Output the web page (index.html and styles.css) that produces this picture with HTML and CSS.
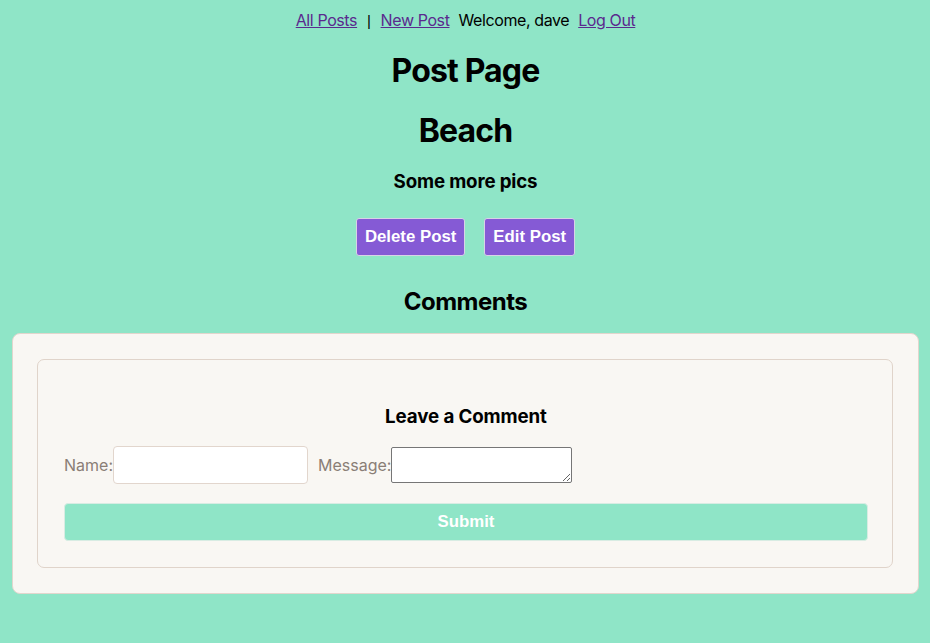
FILE: index.html
```html
<!DOCTYPE html>
<html lang="en">
<head>
<meta charset="utf-8">
<title>Post Page</title>
<link rel="stylesheet" href="styles.css">
</head>
<body>
<nav class="nav">
  <a href="#">All Posts</a>
  <span class="sep">|</span>
  <a href="#">New Post</a>
  <span class="welcome">Welcome, dave</span>
  <a href="#">Log Out</a>
</nav>
<h1 class="title">Post Page</h1>
<h1 class="title">Beach</h1>
<h3 class="subtitle">Some more pics</h3>
<div class="actions">
  <button class="btn">Delete Post</button>
  <button class="btn">Edit Post</button>
</div>
<h2 class="section">Comments</h2>
<div class="card">
  <div class="inner">
    <h3 class="form-title">Leave a Comment</h3>
    <div class="row">
      <label class="lbl">Name:<input class="name-input" type="text"></label>
      <label class="lbl">Message:<textarea class="msg"></textarea></label>
    </div>
    <button class="submit">Submit</button>
  </div>
</div>
</body>
</html>
```
FILE: styles.css
```css
html, body {
  margin: 0;
  background: #8fe5c7;
}
body {
  font-family: Inter, "Noto Sans", sans-serif;
  color: #000;
  text-align: center;
  padding: 10px 11px 40px 12px;
}
.nav {
  display: flex;
  justify-content: center;
  align-items: baseline;
  gap: 9px;
  height: 20px;
  font-size: 16px;
  line-height: 20px;
  letter-spacing: -0.4px;
}
.nav a {
  color: #5a2a8e;
  text-decoration: underline;
}
.sep {
  font-family: "Liberation Sans", Arial, sans-serif;
  font-size: 15px;
  line-height: 20px;
  margin: 0 1px;
}
.title {
  font-size: 32px;
  font-weight: 700;
  margin: 21px 0 20px;
  line-height: 39px;
  letter-spacing: -0.85px;
}
.subtitle {
  font-size: 18.72px;
  font-weight: 700;
  margin: 19px 0;
  line-height: 23px;
  letter-spacing: -0.15px;
}
.actions {
  display: flex;
  justify-content: center;
  gap: 19px;
  margin: 25px 0 31px;
}
.btn {
  box-sizing: border-box;
  height: 38px;
  font-family: "Liberation Sans", Arial, sans-serif;
  font-weight: 700;
  font-size: 16.8px;
  line-height: 18px;
  color: #fff;
  background: #855ad5;
  border: 1px solid #d8d2e6;
  border-radius: 3px;
  padding: 0 8px;
}
.section {
  font-size: 24px;
  font-weight: 700;
  margin: 20px 0 17px;
  line-height: 29px;
  letter-spacing: -0.5px;
}
.card {
  background: #f9f7f3;
  border: 1px solid #e2d6cd;
  border-radius: 8px;
  padding: 25px 25px 25px 24px;
}
.inner {
  border: 1px solid #e0d4ca;
  border-radius: 7px;
  padding: 28px 24px 26px 26px;
}
.form-title {
  font-size: 18.72px;
  font-weight: 700;
  line-height: 22px;
  margin: 18px 0 18px;
  letter-spacing: -0.1px;
}
.row {
  display: flex;
  align-items: center;
  gap: 10px;
}
.lbl {
  display: flex;
  align-items: center;
  font-size: 16px;
  color: #8a7e76;
}
.name-input {
  width: 195px;
  height: 38px;
  box-sizing: border-box;
  border: 1px solid #e2d6cd;
  border-radius: 4px;
  background: #fff;
  margin: 0;
}
.msg {
  width: 181px;
  height: 36px;
  box-sizing: border-box;
  border: 1px solid #767676;
  border-radius: 2px;
  background: #fff;
  margin: 0;
}
.submit {
  display: block;
  width: 100%;
  margin-top: 19px;
  height: 38px;
  font-family: "Liberation Sans", Arial, sans-serif;
  font-weight: 700;
  font-size: 16.8px;
  color: #fff;
  background: #8fe5c7;
  border: 1px solid #d8ece3;
  border-radius: 4px;
}
```
